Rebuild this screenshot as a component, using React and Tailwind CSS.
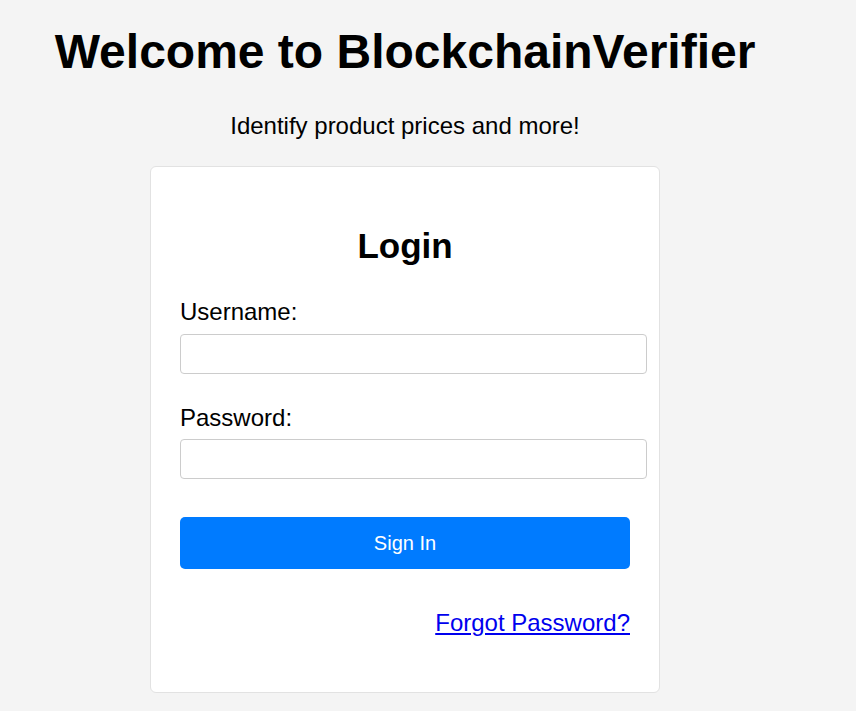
export default function App() {
  return (
    <div className="min-h-[711px] bg-[#f4f4f4] font-['Liberation_Sans',Arial,sans-serif] text-black">
      <div className="w-[810px] text-center pt-[24px]">
        <h1 className="text-[48px] leading-[56px] font-bold m-0">Welcome to BlockchainVerifier</h1>
        <p className="text-[24px] leading-[28px] mt-[32px]">Identify product prices and more!</p>
        <div className="w-[510px] mx-auto mt-[26px] bg-white border border-[#e2e2e2] rounded-[6px] pl-[29px] pr-[29px] pt-[59px] pb-[52px] text-left">
          <h2 className="text-[35px] leading-[40px] font-bold text-center">Login</h2>
          <label className="block text-[24px] leading-[28px] mt-[32px]">Username:</label>
          <input
            type="text"
            className="block w-[467px] h-[40px] mt-[8px] bg-white border border-[#cccccc] rounded-[4px] px-[8px] outline-none"
          />
          <label className="block text-[24px] leading-[28px] mt-[30px]">Password:</label>
          <input
            type="password"
            className="block w-[467px] h-[40px] mt-[7px] bg-white border border-[#cccccc] rounded-[4px] px-[8px] outline-none"
          />
          <button className="block w-[450px] h-[52px] mt-[38px] bg-[#007bff] text-white text-[20px] rounded-[5px]">
            Sign In
          </button>
          <div className="w-[450px] text-right mt-[40px] leading-[28px]">
            <a href="#" className="text-[24px] leading-[28px] text-[#0000ee] underline">
              Forgot Password?
            </a>
          </div>
        </div>
      </div>
    </div>
  );
}
